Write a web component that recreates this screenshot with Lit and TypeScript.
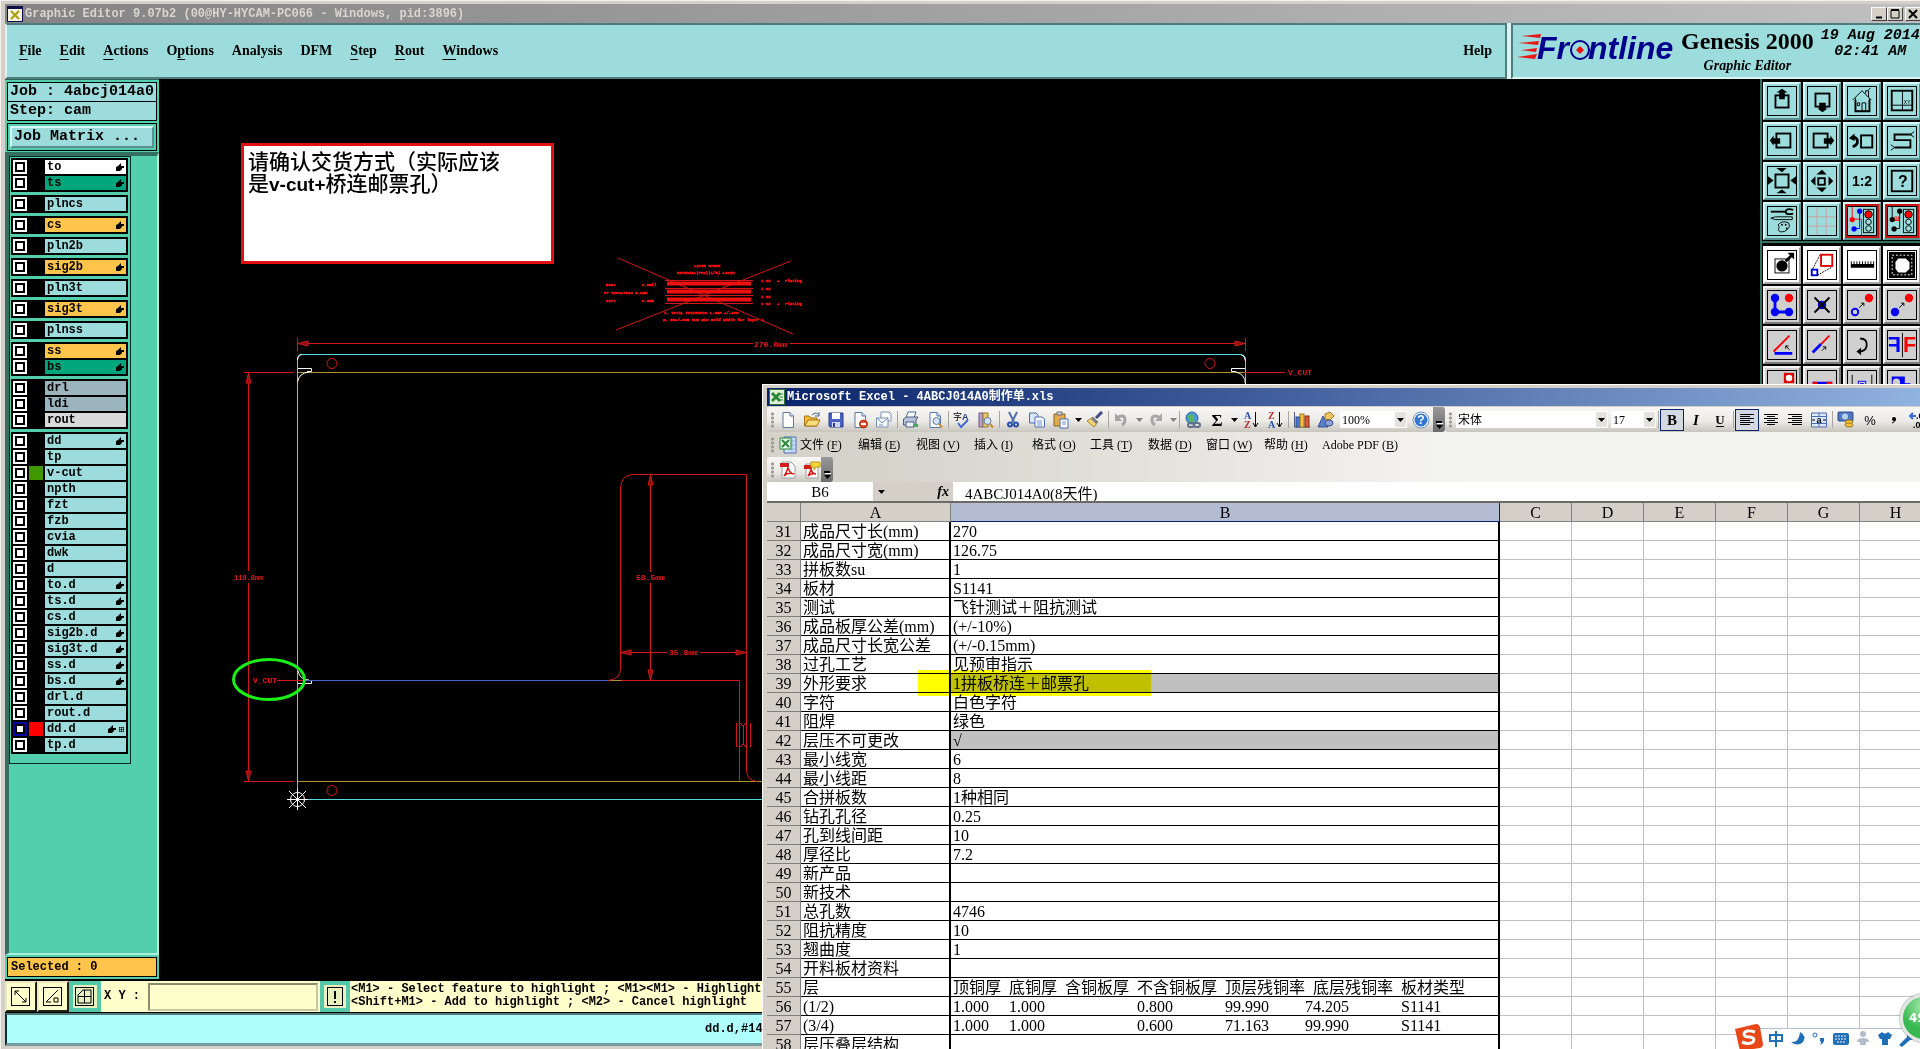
import { LitElement, html, svg, css, nothing } from "lit";
import { customElement, property } from "lit/decorators.js";
import { classMap } from "lit/directives/class-map.js";

/* ---------- data ---------- */

interface Layer { name: string; tone?: string; hand?: boolean; swatch?: string; active?: boolean; }

const GROUPS: Layer[][] = [
  [{ name: "to", tone: "white", hand: true }, { name: "ts", tone: "green", hand: true }],
  [{ name: "plncs" }],
  [{ name: "cs", tone: "orange", hand: true }],
  [{ name: "pln2b" }],
  [{ name: "sig2b", tone: "orange", hand: true }],
  [{ name: "pln3t" }],
  [{ name: "sig3t", tone: "orange", hand: true }],
  [{ name: "plnss" }],
  [{ name: "ss", tone: "orange", hand: true }, { name: "bs", tone: "green", hand: true }],
  [{ name: "drl", tone: "slate" }, { name: "ldi", tone: "slate" }, { name: "rout", tone: "silver" }],
  [
    { name: "dd", hand: true }, { name: "tp" }, { name: "v-cut", swatch: "lime" }, { name: "npth" },
    { name: "fzt" }, { name: "fzb" }, { name: "cvia" }, { name: "dwk" }, { name: "d" },
    { name: "to.d", hand: true }, { name: "ts.d", hand: true }, { name: "cs.d", hand: true },
    { name: "sig2b.d", hand: true }, { name: "sig3t.d", hand: true }, { name: "ss.d", hand: true },
    { name: "bs.d", hand: true }, { name: "drl.d" }, { name: "rout.d" },
    { name: "dd.d", hand: true, swatch: "red", active: true }, { name: "tp.d" },
  ],
];

const ROWS: [number, string, string | string[]][] = [
  [31, "成品尺寸长(mm)", "270"],
  [32, "成品尺寸宽(mm)", "126.75"],
  [33, "拼板数su", "1"],
  [34, "板材", "S1141"],
  [35, "测试", "飞针测试＋阻抗测试"],
  [36, "成品板厚公差(mm)", "(+/-10%)"],
  [37, "成品尺寸长宽公差", "(+/-0.15mm)"],
  [38, "过孔工艺", "见预审指示"],
  [39, "外形要求", "1拼板桥连＋邮票孔"],
  [40, "字符", "白色字符"],
  [41, "阻焊", "绿色"],
  [42, "层压不可更改", "√"],
  [43, "最小线宽", "6"],
  [44, "最小线距", "8"],
  [45, "合拼板数", "1种相同"],
  [46, "钻孔孔径", "0.25"],
  [47, "孔到线间距", "10"],
  [48, "厚径比", "7.2"],
  [49, "新产品", ""],
  [50, "新技术", ""],
  [51, "总孔数", "4746"],
  [52, "阻抗精度", "10"],
  [53, "翘曲度", "1"],
  [54, "开料板材资料", ""],
  [55, "层", ["顶铜厚", "底铜厚", "含铜板厚", "不含铜板厚", "顶层残铜率", "底层残铜率", "板材类型"]],
  [56, "(1/2)", ["1.000", "1.000", "", "0.800", "99.990", "74.205", "S1141"]],
  [57, "(3/4)", ["1.000", "1.000", "", "0.600", "71.163", "99.990", "S1141"]],
  [58, "层压叠层结构", ""],
];

/* ---------- icons of the editor tool box, drawn on a 30 x 30 grid ---------- */

const line = "fill:none;stroke:#000";
const TEAL_TOOLS: [string, unknown, boolean?][] = [
  ["Scroll up", svg`<rect x="8" y="9" width="14" height="13" style=${line} stroke-width="2"/><path d="M15 2L21 6H18V13H12V6H9Z"/>`],
  ["Scroll down", svg`<rect x="8" y="7" width="15" height="14" style=${line} stroke-width="2"/><path d="M15.500 27L21 23H19V17H12V23H10Z"/>`],
  ["Home view", svg`<path d="M5 14L15 4L25 14M8 12V26H23V12M15 26V17H19V26M10 17H12.500V20H10ZM19 7V4H22V11M22 3L24 1" style=${line} stroke-width="1"/><path d="M8 14V26H23V14" style=${line} stroke-width="2"/>`],
  ["Coordinates", svg`<rect x="4" y="4" width="22" height="21" style=${line} stroke-width="2"/><path d="M15.500 4V25M4 19.500H26" style=${line}/><text x="17" y="18" font-size="6" font-family="Liberation Mono">XY</text>`],
  ["Scroll left", svg`<rect x="9" y="7" width="15" height="15" style=${line} stroke-width="2"/><path d="M2 14.500L6 9V12H13V18H6V20Z"/>`],
  ["Scroll right", svg`<rect x="6" y="7" width="15" height="15" style=${line} stroke-width="2"/><path d="M28 14.500L24 9V12H17V18H24V20Z"/>`],
  ["Previous view", svg`<rect x="14" y="9" width="12" height="13" style=${line} stroke-width="2"/><path d="M5 11Q11 11 10 17Q9 20 5 21" style=${line} stroke-width="3"/><path d="M1 12L7 7V15Z"/>`],
  ["Serpentine", svg`<path d="M25 8H7V14H24V22H7" style=${line} stroke-width="2"/><path d="M24 8L28 5M24 8L28 11M7 22L3 19M7 22L3 25" style=${line}/>`],
  ["Zoom in", svg`<rect x="8" y="8" width="14" height="14" style=${line} stroke-width="2"/><path d="M0 10L6 14.500L0 19ZM30 10L24 14.500L30 19ZM9 1H20L15 5.500ZM9 28H20L15 24Z"/>`],
  ["Zoom out", svg`<rect x="11" y="12" width="7" height="7" style=${line} stroke-width="2"/><path d="M3 15L8 10V20ZM27 15L22 10V20ZM9 8H20L15 3ZM9 22H20L15 27Z"/>`],
  ["Zoom ratio", svg`<text x="15" y="20" text-anchor="middle" font-size="15" font-weight="bold" font-family="Liberation Sans">1:2</text>`],
  ["Query", svg`<rect x="4" y="4" width="22" height="22" style=${line} stroke-width="2"/><text x="16" y="21" text-anchor="middle" font-size="17" font-weight="bold" font-family="Liberation Sans">?</text>`],
  ["Drawing settings", svg`<path d="M3 4H19V6H3Z"/><path d="M27 3Q19 1 19 5Q19 9 27 7" style=${line} stroke-width="2"/><path d="M3 12L8 10.500H26V13.500H8ZM11 19Q15 14 22 17Q25 22 18 26Q12 28 11 24Q13 22 11 19Z" style=${line}/><circle cx="15" cy="19" r="1"/><circle cx="19" cy="19" r="1"/><circle cx="20" cy="23" r="1"/>`],
  ["Grid", svg`<path d="M9.500 0V30M19.500 0V30M0 10.500H30M0 20.500H30" fill="none" stroke="#c8a0a0"/>`],
  ["Net check", svg`<path d="M4.500 0V13H14.500V30" fill="none" stroke="#f00"/><path d="M12.500 5V23H7" fill="none" stroke="#00f"/><circle cx="4.500" cy="13.500" r="2.800" fill="#f00"/><circle cx="12.500" cy="4.500" r="2.800" fill="#00f"/><circle cx="6.500" cy="23.500" r="2.800" fill="#00f"/><rect x="16.500" y="2.500" width="11" height="25" style=${line}/><circle cx="22" cy="8" r="4" fill="#f00" stroke="#000"/><circle cx="22" cy="16" r="3" style=${line}/><circle cx="22" cy="23" r="3" style=${line}/>`, true],
  ["Rule check", svg`<path d="M4.500 0V13M12.500 5V23H7" style=${line}/><path d="M5 14.500H12M7.500 10V14M9.500 10V14M11.500 10V14" stroke="#f00"/><circle cx="4.500" cy="13.500" r="2.800"/><circle cx="12.500" cy="4.500" r="2.800"/><circle cx="6.500" cy="23.500" r="2.800"/><rect x="16.500" y="2.500" width="11" height="25" style=${line}/><circle cx="22" cy="8" r="4" fill="#f00" stroke="#000"/><circle cx="22" cy="16" r="3" style=${line}/><circle cx="22" cy="23" r="3" style=${line}/>`, true],
];

const GREY_TOOLS: [string, unknown][] = [
  ["Select", svg`<rect x="7.500" y="8.500" width="15" height="15" style=${line}/><circle cx="15" cy="16" r="6"/><path d="M19 11L25 5" stroke="#000" stroke-width="3"/><path d="M21 2H28V9Z"/>`],
  ["Area select", svg`<path d="M5 19L13 4M10 26L26 17" style=${line} stroke-dasharray="2 1"/><rect x="14" y="4" width="12" height="12" fill="none" stroke="#e00000" stroke-width="2"/><rect x="4" y="20" width="6" height="6" fill="none" stroke="#0000d0" stroke-width="2"/>`],
  ["Measure", svg`<path d="M3 18V11H4V14H6V11H7V14H9V11H10V14H12V11H13V14H15V11H16V14H18V11H19V14H21V11H22V14H24V11H25V14H27V11H28V18Z"/>`],
  ["Feature histogram", svg`<rect x="1" y="1" width="28" height="28"/><rect x="4.500" y="4.500" width="21" height="21" fill="none" stroke="#fff" stroke-dasharray="2 2"/><path d="M11 8H19L23 12V19L19 23H11L8 19V12Z" fill="#fff"/>`],
  ["Chain", svg`<path d="M7.500 7.500V22.500H22.500" fill="none" stroke="#00f" stroke-width="3"/><circle cx="7.500" cy="7.500" r="4.500" fill="#00f"/><circle cx="7.500" cy="22.500" r="4.500" fill="#00f"/><circle cx="22.500" cy="22.500" r="4.500" fill="#00f"/><circle cx="22.500" cy="7.500" r="4.500" fill="#f00"/>`],
  ["Delete", svg`<circle cx="15" cy="15" r="4.500" fill="#00c"/><path d="M7 7L23 23M23 7L7 23" style=${line} stroke-width="2"/>`],
  ["Copy", svg`<circle cx="7.500" cy="22.500" r="3.500" fill="none" stroke="#00f" stroke-width="2"/><circle cx="22.500" cy="7.500" r="4.500" fill="#f00"/><path d="M12 18L17 13M14 13H17V16" style=${line}/>`],
  ["Move", svg`<circle cx="7.500" cy="22.500" r="4.500" fill="#00f"/><circle cx="22.500" cy="7.500" r="4.500" fill="#f00"/><path d="M12 18L17 13M14 13H17V16" style=${line}/>`],
  ["Rotate", svg`<path d="M6 22L23 5" stroke="#f00" stroke-width="2"/><path d="M7 24H26" stroke="#00f" stroke-width="3"/><path d="M23 20L19 16M19 19V16H22" style=${line}/>`],
  ["Stretch", svg`<path d="M14 14L23 5" stroke="#f00" stroke-width="2"/><path d="M5 23L14 14" stroke="#00f" stroke-width="3"/><path d="M15 21L19 17M16 17H19V20" style=${line}/>`],
  ["Turn", svg`<path d="M13 8Q21 8 20 16Q19 22 12 22" style=${line} stroke-width="2"/><path d="M14 18L9 22L14 26Z"/>`],
  ["Mirror", svg`<g font-family="Liberation Sans" font-weight="bold" font-size="23"><text x="15" y="23" fill="#00f" transform="translate(29 0) scale(-1 1)">F</text><text x="16" y="23" fill="#f00">F</text></g><path d="M15.500 2V28" style=${line}/>`],
  ["Pad edit", svg`<rect x="17" y="2" width="11" height="11" fill="#e00000"/><circle cx="22.500" cy="7.500" r="3.500" fill="#fff"/>`],
  ["Line edit", svg`<path d="M5 13H26" stroke="#00f" stroke-width="3"/><path d="M5 13H10M20 13H26" stroke="#f00" stroke-width="3"/>`],
  ["Spread", svg`<path d="M4.500 4V20M25.500 4V20" style=${line}/><rect x="11" y="11" width="8" height="8" fill="none" stroke="#00f"/><rect x="13.500" y="13.500" width="3" height="3" fill="none" stroke="#00f"/>`],
  ["Surface edit", svg`<path d="M4 6H18V13H24V20H4Z" fill="#00f"/><circle cx="9" cy="12" r="4" fill="#cfcfcf"/>`],
];

/* ---------- icons of the spreadsheet tool bar, drawn on an 18 x 18 grid ---------- */

const page = svg`<path d="M4 1.500H11L14.500 5V16.500H4Z" fill="#fff" stroke="#5b78a8"/><path d="M11 1.500V5H14.500" fill="#cddcf2" stroke="#5b78a8"/>`;
const lens = svg`<circle cx="10.500" cy="10" r="3.500" fill="#cfe4fb" stroke="#6a7c98"/><path d="M13 13L16 16.500" stroke="#c98a2c" stroke-width="2"/>`;
const XL: Record<string, unknown> = {
  new: page,
  open: svg`<path d="M1.500 15V5H6L8 7H14V15Z" fill="#f2b93c" stroke="#a87614"/><path d="M2 15L5 9H17L14 15Z" fill="#fddc7c" stroke="#a87614"/><path d="M9 4Q13 0 16 4M16 1V5H12" fill="none" stroke="#48699c"/>`,
  save: svg`<path d="M2 2H16V16H3L2 15Z" fill="#4a62c4" stroke="#2b3b8c"/><rect x="5" y="2" width="8" height="6" fill="#fff"/><rect x="5" y="11" width="8" height="5" fill="#ccd6ee"/><rect x="6" y="12" width="2" height="4" fill="#2b3b8c"/>`,
  perm: svg`${page}<circle cx="12.500" cy="13" r="4" fill="#e2502c" stroke="#a82a10"/><path d="M10 13H15" stroke="#fff" stroke-width="2"/>`,
  mail: svg`<path d="M6 1H14L16 3V10H6Z" fill="#fff" stroke="#7a90b4"/><path d="M1.500 7H13V16H1.500Z" fill="#f4f7fc" stroke="#7a90b4"/><path d="M2 7L7 12L13 7M4 14H8" fill="none" stroke="#7a90b4"/>`,
  print: svg`<path d="M6 1H14L12 7H4Z" fill="#fff" stroke="#4d6aa0"/><path d="M1.500 8L4 6H16L14 9V14H1.500Z" fill="#b8c4dc" stroke="#4a5c80"/><path d="M4 11H12V16H4Z" fill="#eef3ff" stroke="#4a5c80"/><path d="M11 13H16V16H11Z" fill="#48a860"/>`,
  preview: svg`${page}${lens}`,
  spell: svg`<text x="0" y="9" font-size="9" font-family="Noto Sans CJK SC">字</text><text x="9" y="9" font-size="9" font-weight="bold" font-family="Liberation Sans" fill="#27407c">A</text><path d="M5 12L8 16L15 9" fill="none" stroke="#3c6bd0" stroke-width="2"/>`,
  research: svg`<path d="M2 2H6V16H2Z" fill="#b8a0cc" stroke="#6d5488"/><path d="M6 2H11V16H6Z" fill="#e8c868" stroke="#98782c"/>${lens}`,
  cut: svg`<path d="M5 1L10 11M13 1L8 11" stroke="#5070a8" stroke-width="2"/><circle cx="6" cy="13.500" r="2" fill="none" stroke="#2850a8" stroke-width="2"/><circle cx="12" cy="13.500" r="2" fill="none" stroke="#2850a8" stroke-width="2"/>`,
  copy: svg`<path d="M1.500 2H8L10 4V12H1.500Z" fill="#dce8fa" stroke="#4a6cb0"/><path d="M7 6H14L16.500 8V16H7Z" fill="#fff" stroke="#4a6cb0"/><path d="M9 10H14M9 12H14M9 14H14" stroke="#6a90d8"/>`,
  paste: svg`<path d="M2 3H13V15H2Z" fill="#e2ac4c" stroke="#8c6420"/><path d="M5 1H10V4H5Z" fill="#d8d8d8" stroke="#6c6c6c"/><path d="M8 8H16V17H8Z" fill="#fff" stroke="#4a6cb0"/><path d="M10 11H14M10 13H14" stroke="#6a90d8"/>`,
  painter: svg`<path d="M16 1L10 7" stroke="#3c4c88" stroke-width="3"/><path d="M7 6L12 11L8 16L1 10Z" fill="#f4d470" stroke="#a88434"/><path d="M7 6L12 11L10 13L5 8Z" fill="#7c7c9c"/>`,
  undo: svg`<path d="M3 7Q12 2 12 9Q12 12 9 14" fill="none" stroke="#a4a4a4" stroke-width="3"/><path d="M2 2V10H9Z" fill="#a4a4a4"/>`,
  redo: svg`<path d="M14 7Q5 2 5 9Q5 12 8 14" fill="none" stroke="#a8a8a8" stroke-width="3"/><path d="M15 2V10H8Z" fill="#a8a8a8"/>`,
  link: svg`<circle cx="8" cy="7" r="6" fill="#4c98d8" stroke="#2c6498"/><path d="M4 5Q8 2 10 5Q8 8 11 10Q7 14 5 9Z" fill="#58b858"/><rect x="4" y="12" width="6" height="4" rx="2" fill="none" stroke="#60708c" stroke-width="2"/><rect x="10" y="12" width="6" height="4" rx="2" fill="none" stroke="#60708c" stroke-width="2"/>`,
  sum: svg`<text x="9" y="15" text-anchor="middle" font-size="17" font-weight="bold" font-family="Liberation Serif">Σ</text>`,
  az: svg`<g font-size="10" font-weight="bold" font-family="Liberation Serif"><text x="2" y="8" fill="#2c50a8">A</text><text x="2" y="17" fill="#b03030">Z</text></g><path d="M13.500 1V15M11 12L13.500 16L16 12" fill="none" stroke="#000"/>`,
  za: svg`<g font-size="10" font-weight="bold" font-family="Liberation Serif"><text x="2" y="8" fill="#b03030">Z</text><text x="2" y="17" fill="#2c50a8">A</text></g><path d="M13.500 1V15M11 12L13.500 16L16 12" fill="none" stroke="#000"/>`,
  chart: svg`<path d="M1.500 1V16H17" fill="none" stroke="#4a5c80"/><rect x="3" y="6" width="4" height="10" fill="#4878d0" stroke="#2c4c94"/><rect x="7" y="3" width="4" height="13" fill="#f0c040" stroke="#a07818"/><rect x="12" y="5" width="4" height="11" fill="#d85c38" stroke="#8c3014"/>`,
  draw: svg`<path d="M8 3L13 1L17 5L13 9L8 8Z" fill="#f0c860" stroke="#98782c"/><path d="M6 5L11 16H1Z" fill="#5880c8" stroke="#34508c"/><ellipse cx="12" cy="12" rx="4" ry="3" fill="#8ca4d8" stroke="#34508c"/>`,
  help: svg`<circle cx="9" cy="9" r="8" fill="#fff" stroke="#6c94d0"/><circle cx="9" cy="9" r="6.500" fill="#3474d4"/><text x="9" y="13" text-anchor="middle" font-size="12" font-weight="bold" fill="#fff" font-family="Liberation Sans">?</text>`,
  bold: svg`<text x="9" y="14" text-anchor="middle" font-size="15" font-weight="bold" font-family="Liberation Serif">B</text>`,
  italic: svg`<text x="9" y="14" text-anchor="middle" font-size="15" font-weight="bold" font-style="italic" font-family="Liberation Serif">I</text>`,
  under: svg`<text x="9" y="13" text-anchor="middle" font-size="13" font-weight="bold" font-family="Liberation Serif">U</text><path d="M5 15.500H13" stroke="#000"/>`,
  left: svg`<path d="M2 3.500H16M2 5.500H12M2 7.500H16M2 9.500H12M2 11.500H16M2 13.500H12" stroke="#000"/>`,
  center: svg`<path d="M2 3.500H16M5 5.500H13M2 7.500H16M5 9.500H13M2 11.500H16M5 13.500H13" stroke="#000"/>`,
  right: svg`<path d="M2 3.500H16M6 5.500H16M2 7.500H16M6 9.500H16M2 11.500H16M6 13.500H16" stroke="#000"/>`,
  merge: svg`<path d="M1.500 2H16.500V16H1.500ZM1.500 5.500H16.500M1.500 12.500H16.500M9 2V5M9 13V16" fill="#dce8fa" stroke="#4a6cb0"/><text x="9" y="12" text-anchor="middle" font-size="9" font-weight="bold" font-family="Liberation Sans">a</text><path d="M2 9H5M13 9H16" stroke="#000"/>`,
  money: svg`<rect x="1" y="1" width="15" height="9" rx="1" fill="#5078c0" stroke="#2c4c94"/><circle cx="8" cy="5.500" r="3" fill="#b8d0f0"/><ellipse cx="12" cy="11" rx="4" ry="2" fill="#f0c040" stroke="#a07818"/><ellipse cx="12" cy="14" rx="4" ry="2" fill="#f0c040" stroke="#a07818"/>`,
  percent: svg`<text x="9" y="14" text-anchor="middle" font-size="13" font-family="Liberation Sans">%</text>`,
  comma: svg`<circle cx="9" cy="8" r="2"/><path d="M10.500 8Q10.500 11 7 12" fill="none" stroke="#000"/>`,
  decimal: svg`<g font-size="9" font-weight="bold" font-family="Liberation Sans"><text x="7" y="8">.0</text><text x="4" y="17">.00</text></g><path d="M7 5H1M4 2L1 5L4 8" fill="none" stroke="#3c6bd0" stroke-width="2"/>`,
  book: svg`<path d="M5 1H17V17H5Z" fill="#cfe0f8" stroke="#4a6cb0"/><path d="M9 5H17M9 9H17M9 13H17M13 1V17" stroke="#8cacd8"/><path d="M1 2H12V13H1Z" fill="#e8f6e8" stroke="#2c8838"/><path d="M3 4L10 11M10 4L3 11" stroke="#2c8838" stroke-width="2"/>`,
  pdf: svg`<path d="M3 1H12L16 5V17H3Z" fill="#fff" stroke="#9c9c9c"/><rect x="1" y="2" width="9" height="4" fill="#d41c1c"/><path d="M5 15Q9 9 9 6Q10 12 15 13Q9 11 5 15Z" fill="none" stroke="#d41c1c" stroke-width="1.500"/>`,
  pdfNote: svg`<path d="M3 3H12L15 6V17H3Z" fill="#fff" stroke="#9c9c9c"/><rect x="1" y="4" width="8" height="4" fill="#d41c1c"/><path d="M5 15Q8 10 8 8Q9 13 13 13Q8 12 5 15Z" fill="none" stroke="#d41c1c" stroke-width="1.500"/><path d="M8 1H17V6H13L11 9V6H8Z" fill="#f8d838" stroke="#b89810"/>`,
};

const caret = html`<svg class="caret" viewBox="0 0 7 4" width="7" height="4" aria-hidden="true"><path d="M0 0H7L3.500 4Z"/></svg>`;
const overflow = html`<svg viewBox="0 0 7 8" width="7" height="8" aria-hidden="true"><path d="M0 1H6" stroke="#000" stroke-width="2"/><path d="M1 2.500H7" stroke="#fff"/><path d="M0 4H7L3.500 8Z"/></svg>`;
const hand = html`<svg class="hand" viewBox="0 0 8 8" width="8" height="8" aria-hidden="true"><path d="M0 4L2 3L4 1L5 0V3H8V5H6V6L4 8H0Z"/></svg>`;

/* ---------- layer list ---------- */

@customElement("layer-panel")
export class LayerPanel extends LitElement {
  static styles = css`
    :host { display: flex; flex-direction: column; gap: 3px; width: 122px; padding: 1px 2px 9px 1px; border: 1px solid #0c2a22;
      font: bold 12px/14px "Liberation Mono", monospace; color: #000; background: #54cfae; }
    .group { display: flex; flex-direction: column; gap: 2px; padding: 2px; background: #000; }
    .row { display: flex; height: 14px; }
    .tick { appearance: none; flex: none; width: 14px; height: 14px; margin: 0 2px 0 0; border: 2px solid #fff; background: #fff; box-shadow: inset 0 0 0 2px #000; }
    .tick.active { border-color: #0808a0; }
    .swatch { flex: none; width: 14px; margin-right: 2px; background: #000; }
    .swatch.lime { background: #409800; }
    .swatch.red { background: #f00; }
    .name { flex: 1; display: flex; align-items: center; gap: 3px; padding: 0 2px; background: #9cdcdc; }
    .name span { flex: 1; }
    .white { background: #fff; }
    .green { background: #00a57c; }
    .orange { background: #ffc44c; }
    .slate { background: #9cb4be; }
    .silver { background: #dadada; }
  `;
  render() {
    return GROUPS.map((g) => html`<div class="group">${g.map((l) => html`
      <label class="row">
        <input class=${classMap({ tick: true, active: !!l.active })} type="checkbox" .checked=${!!l.active}>
        <i class="swatch ${l.swatch ?? ""}"></i>
        <span class="name ${l.tone ?? ""}"><span>${l.name}</span>${l.hand ? hand : nothing}${l.active
          ? html`<svg viewBox="0 0 5 5" width="5" height="5"><path d="M0 .5H5M0 2.500H5M0 4.500H5M.5 0V5M2.500 0V5M4.500 0V5" stroke="#000" stroke-width=".6"/></svg>` : nothing}</span>
      </label>`)}</div>`);
  }
}

/* ---------- tool tile ---------- */

@customElement("tool-tile")
export class ToolTile extends LitElement {
  @property() label = "";
  @property() tone = "teal";
  @property({ attribute: false }) icon: unknown;
  static styles = css`
    :host { display: block; }
    .tile { display: grid; place-items: center; width: 38px; height: 38px; padding: 0; border: 2px solid; border-radius: 0; }
    .teal { background: #9cdcdc; border-color: #d8f8f8 #5c9090 #5c9090 #d8f8f8; }
    .grey { background: #cfcfcf; border-color: #f4f4f4 #7c7c7c #7c7c7c #f4f4f4; }
    .white { background: #fff; border-color: #fff #a4a4a4 #a4a4a4 #fff; }
    .alert { background: #c81414; border-color: #d8f8f8 #5c9090 #5c9090 #d8f8f8; }
    .alert svg { background: #9cdcdc; }
    svg { display: block; width: 30px; height: 30px; border: 1px solid #000; box-sizing: border-box; }
  `;
  render() {
    return html`<button class="tile ${this.tone}" aria-label=${this.label}><svg viewBox="0 0 30 30">${this.icon}</svg></button>`;
  }
}

/* ---------- board drawing ---------- */

@customElement("board-view")
export class BoardView extends LitElement {
  static styles = css`
    :host { display: block; height: 100%; background: #000; overflow: hidden; }
    svg { display: block; width: 100%; height: 100%; }
    .r { fill: none; stroke: #d01818; }
    .rf { fill: #8c1010; stroke: #d01818; }
    .c { fill: none; stroke: #50d8d8; }
    .w { fill: none; stroke: #fff; }
    .y { fill: none; stroke: #b09030; }
    text { font-family: "Liberation Mono", monospace; font-size: 8px; font-weight: bold; fill: #e81818; }
    .small { font-size: 7px; }
    .tiny text { font-size: 4px; font-weight: bold; fill: #ff1010; stroke: #ff1010; stroke-width: .4px; }
  `;
  render() {
    const arrow = (x: number, y: number, a: number) =>
      svg`<path class="rf" transform="translate(${x} ${y}) rotate(${a})" d="M0 0L10 -2.500V2.500Z"/>`;
    return html`<svg role="img" aria-label="Board outline"><g transform="translate(-159 -79)">
      <path class="r" d="M297.500 338V351M1245.500 338V351M298 343.500H753M790 343.500H1245"/>
      ${arrow(298, 343.5, 0)}${arrow(1245, 343.5, 180)}
      <text x="754" y="347">270.0mm</text>
      <path class="y" d="M297 372.500H1245M297 781.500H770"/>
      <path class="c" d="M770 799.500H297.500V358Q298 354.500 301 354.500H1241Q1245 355 1245.500 358V384"/>
      <path class="w" d="M297.500 360Q298 355 302 354.500M1241 354.500Q1245 356 1245.500 361M298 368.500H311.500V371.500H307M297.500 382Q299 373 309 372M1245 368.500H1231.500V371.500H1236M1236 372Q1245 374 1245.500 384M298 671Q300 680 309 680M298 683.500H311.500V680"/>
      <circle class="r" cx="332" cy="363.500" r="5"/><circle class="r" cx="332" cy="790.500" r="5"/><circle class="r" cx="1210" cy="363.500" r="5"/>
      <path class="r" d="M244 372.500H294M244 781.500H294M248.500 373V571M248.500 583V781"/>
      ${arrow(248.5, 373, 90)}${arrow(248.5, 781, -90)}
      <text class="small" x="234" y="580">118.8mm</text>
      <text x="253" y="683">V_CUT</text><path class="r" d="M277 680.500H306M1245 372.500H1285"/><text x="1288" y="375">V_CUT</text>
      <path d="M306 680.500H608" stroke="#4860d0"/><path class="y" d="M608 680.500H621"/>
      <path class="r" d="M608 680.500Q620.500 679 620.500 669V488Q621 475 633 474.500H746.500V771Q747 780 757 781.500M621 680.500H739.500V781"/>
      <path class="r" d="M650.500 475V572M650.500 583V680M621 652.500H667M700 652.500H746"/>
      ${arrow(650.5, 475, 90)}${arrow(650.5, 680, -90)}${arrow(621, 652.5, 0)}${arrow(746, 652.5, 180)}
      <text x="636" y="580">58.5mm</text><text x="669" y="655">35.8mm</text>
      <path class="r" d="M736.500 723V747M743.500 725V745M750.500 723V747M739 722L743 726L747 722M739 748L743 744L747 748"/>
      <circle class="w" cx="297.500" cy="799.500" r="7"/>
      <path class="w" d="M287 799.500H308M297.500 789V810M289 791L306 808M306 791L289 808"/>
      <ellipse cx="269" cy="679.500" rx="35.500" ry="20" fill="none" stroke="#18f018" stroke-width="3"/>
      <g class="tiny">
        <path class="r" d="M618 258L793 334M791 261L616 330M665 280.500H753M665 288.500H753M665 295.500H753M665 303.500H753"/>
        <path d="M667 283.500H751M667 291.500H751M667 299.500H751" stroke="#f01010" stroke-width="4"/>
        <text x="694" y="267">LAYER STACK</text><text x="677" y="274">MATERIAL(FR4)(1/4) LAYER</text>
        <text x="606" y="286">Base</text><text x="642" y="286">3.0mil</text>
        <text x="604" y="294">PP 1080+7628 0.2mm</text>
        <text x="606" y="302">Core</text><text x="642" y="302">0.8mm</text>
        <text x="761" y="282">1 OZ</text><text x="777" y="282">+</text><text x="785" y="282">Plating</text>
        <text x="761" y="290">1 OZ</text><text x="761" y="298">1 OZ</text>
        <text x="761" y="305">1 OZ</text><text x="777" y="305">+</text><text x="785" y="305">Plating</text>
        <text x="664" y="314">1. TOTAL THICKNESS 1.6MM +/-10%</text>
        <text x="663" y="321">2. 5%+/-5um 5um min Gold width for layer 1</text>
      </g>
    </g></svg>`;
  }
}

/* ---------- spreadsheet window ---------- */

@customElement("sheet-window")
export class SheetWindow extends LitElement {
  static styles = css`
    :host { display: flex; flex-direction: column; box-sizing: border-box; overflow: hidden; padding: 3px 0 0 4px; border: solid #fff; border-width: 1px 0 0 1px;
      background: #d4d0c8; color: #000; font: 12px/16px "Liberation Serif", "Noto Sans CJK SC", serif; }
    * { box-sizing: border-box; }
    button { appearance: none; border: 0; padding: 0; background: none; color: inherit; font: inherit; border-radius: 0; }
    .title { flex: none; display: flex; align-items: center; gap: 2px; height: 18px; margin-bottom: 1px; padding-left: 2px;
      background: linear-gradient(90deg, #0a246a, #4a68a4 50%, #92b4e0); color: #fff; font: bold 12px/18px "Liberation Mono", "Noto Sans CJK SC", monospace; white-space: nowrap; }
    .bars { flex: none; background: linear-gradient(90deg, #d6d3cb 10%, #f4f4f2 60%); }
    .line { display: flex; height: 25px; }
    .strip { display: flex; align-items: center; height: 25px; padding-left: 4px; border-radius: 3px 0 0 3px; background: linear-gradient(#f8f7f5, #ecebe7 55%, #c8c5bd); }
    .grow { flex: 1; }
    .grip { flex: none; width: 3px; height: 16px; margin-right: 2px; background: radial-gradient(circle, #9c988f 1px, #0000 2px) 0 0 / 3px 4px; }
    .ico { flex: none; display: grid; place-items: center; width: 24px; height: 22px; }
    .ico.on { border: 1px solid #0a246a; background: #d4d8e0; }
    .ico svg { display: block; }
    .drop { flex: none; display: grid; place-items: center; width: 10px; height: 22px; }
    .dim { opacity: .45; }
    .sep { flex: none; width: 1px; height: 17px; margin: 0 1px; background: #a8a59d; }
    .cap { flex: none; display: flex; align-items: flex-end; justify-content: center; width: 12px; height: 25px; padding-bottom: 3px; border-radius: 0 3px 3px 0; background: linear-gradient(#989898, #6c6c6c); }
    .combo { flex: none; display: flex; align-items: center; height: 17px; margin: 0 2px; background: #fff; }
    .combo select { appearance: none; flex: 1; min-width: 0; border: 0; padding: 0 2px; background: #fff; color: #000; font: inherit; }
    .combo span { display: grid; place-items: center; width: 11px; height: 15px; margin-right: 1px; background: #e4e2dc; }
    .zoom { width: 67px; } .face { width: 152px; margin-right: 1px; } .size { width: 45px; margin-right: 1px; }
    .menu { display: flex; align-items: center; height: 25px; padding-left: 4px; }
    .menu button { min-width: 58px; text-align: left; white-space: nowrap; font: 12px/16px "Liberation Serif", "Noto Sans CJK SC", serif; }
    .menu .ico { min-width: 0; width: 24px; }
    u { text-underline-offset: 2px; }
    .short { width: 54px; }
    .formula { flex: none; display: flex; align-items: center; height: 19px; background: #d4d0c8; }
    .formula input { height: 19px; border: 0; border-radius: 0; padding: 1px 0 0; background: #fff; color: #000; font: 15px/18px "Liberation Serif", "Noto Sans CJK SC", serif; }
    .cellname { width: 106px; text-align: center; }
    .formula .text { flex: 1; min-width: 0; padding-left: 12px; }
    .pick { width: 16px; display: grid; place-items: center; }
    .fx { width: 64px; padding-right: 4px; text-align: right; font: italic bold 14px/18px "Liberation Serif", serif; }
    .grid { flex: 1; min-height: 0; overflow: hidden; border-top: 2px solid #6c6a66; background: #fff; }
    table { width: 1165px; table-layout: fixed; border-collapse: separate; border-spacing: 0; font: 16px/17px "Liberation Serif", "Noto Sans CJK SC", serif; }
    .num { width: 34px; } .a { width: 150px; } .b { width: 549px; } .rest { width: 72px; }
    th { height: 19px; padding: 1px 0 0; border: solid #808080; border-width: 0 1px 1px 0; background: #d4d0c8; font-weight: normal; text-align: center; }
    thead .cur { background: #b4bcd4; border-color: #0a246a; }
    td { height: 19px; padding: 0 0 0 2px; border: solid #c0c0c0; border-width: 0 1px 1px 0; white-space: nowrap; overflow: hidden; }
    .box { border-color: #000; border-right-width: 2px; }
    td div { height: 18px; line-height: 20px; }
    td .cols { display: grid; grid-template-columns: 56px 56px 72px 88px 80px 96px auto; }
    td .cols.head { grid-template-columns: 56px 56px 72px 88px 88px 88px auto; }
    .shade { background: #c0c0c0; }
    .marker { position: absolute; left: 155px; top: 285px; width: 233px; height: 26px; background: #ff0; mix-blend-mode: multiply; pointer-events: none; }
  `;
  private ico(key: string, label: string, cls = "") {
    return html`<button class="ico ${cls}" aria-label=${label}><svg viewBox="0 0 18 18" width="18" height="18">${XL[key]}</svg></button>`;
  }
  private menu(text: string, key: string) {
    return html`<button>${text} (<u>${key}</u>)</button>`;
  }
  render() {
    const sep = html`<i class="sep"></i>`;
    const drop = (dim = false) => html`<button class=${classMap({ drop: true, dim })} aria-label="More">${caret}</button>`;
    return html`
      <div class="title"><svg width="16" height="16" viewBox="0 0 16 16"><rect x=".5" y=".5" width="15" height="15" fill="#e0f0dc" stroke="#2c7038"/><path d="M3 4L11 12M11 4L3 12" stroke="#2c8838" stroke-width="3"/><path d="M11 5H14M11 8H14M11 11H14" stroke="#2c8838"/></svg><span>Microsoft Excel - 4ABCJ014A0制作单.xls</span></div>
      <div class="bars">
        <div class="line">
          <div class="strip"><i class="grip"></i>
            ${this.ico("new", "New")}${this.ico("open", "Open")}${this.ico("save", "Save")}${this.ico("perm", "Permission")}${this.ico("mail", "E-mail")}${sep}
            ${this.ico("print", "Print")}${this.ico("preview", "Print preview")}${sep}
            ${this.ico("spell", "Spelling")}${this.ico("research", "Research")}${sep}
            ${this.ico("cut", "Cut")}${this.ico("copy", "Copy")}${this.ico("paste", "Paste")}${drop()}${this.ico("painter", "Format painter")}${sep}
            ${this.ico("undo", "Undo")}${drop(true)}${this.ico("redo", "Redo")}${drop(true)}${sep}
            ${this.ico("link", "Hyperlink")}${this.ico("sum", "AutoSum")}${drop()}${this.ico("az", "Sort ascending")}${this.ico("za", "Sort descending")}${sep}
            ${this.ico("chart", "Chart")}${this.ico("draw", "Drawing")}
            <div class="combo zoom"><select aria-label="Zoom"><option>100%</option></select><span>${caret}</span></div>
            ${this.ico("help", "Help")}
          </div>
          <div class="cap">${overflow}</div>
          <div class="strip grow"><i class="grip"></i>
            <div class="combo face"><select aria-label="Font"><option>宋体</option></select><span>${caret}</span></div>
            <div class="combo size"><select aria-label="Font size"><option>17</option></select><span>${caret}</span></div>${sep}
            ${this.ico("bold", "Bold", "on")}${this.ico("italic", "Italic")}${this.ico("under", "Underline")}${sep}
            ${this.ico("left", "Align left", "on")}${this.ico("center", "Center")}${this.ico("right", "Align right")}${this.ico("merge", "Merge cells")}${sep}
            ${this.ico("money", "Currency")}${this.ico("percent", "Percent")}${this.ico("comma", "Comma")}${this.ico("decimal", "Increase decimal")}
          </div>
        </div>
        <div class="menu"><i class="grip"></i>${this.ico("book", "Workbook")}
          ${this.menu("文件", "F")}${this.menu("编辑", "E")}${this.menu("视图", "V")}${this.menu("插入", "I")}${this.menu("格式", "O")}
          ${this.menu("工具", "T")}${this.menu("数据", "D")}${this.menu("窗口", "W")}${this.menu("帮助", "H")}${this.menu("Adobe PDF", "B")}
        </div>
        <div class="line"><div class="strip short"><i class="grip"></i>${this.ico("pdf", "Convert to PDF")}${this.ico("pdfNote", "Convert and review")}</div><div class="cap">${overflow}</div></div>
      </div>
      <div class="formula"><input class="cellname" aria-label="Name box" .value=${"B6"}><button class="pick" aria-label="Names">${caret}</button><span class="fx">fx</span><input class="text" aria-label="Formula" .value=${"4ABCJ014A0(8天件)"}></div>
      <div class="grid"><table>
        <colgroup><col class="num"><col class="a"><col class="b"><col class="rest" span="6"></colgroup>
        <thead><tr><th></th><th>A</th><th class="cur">B</th>${["C", "D", "E", "F", "G", "H"].map((c) => html`<th>${c}</th>`)}</tr></thead>
        <tbody>${ROWS.map(([n, a, b]) => html`<tr><th>${n}</th><td class="box"><div>${a}</div></td>
          <td class=${classMap({ box: true, shade: n === 39 || n === 42 })}>${Array.isArray(b)
            ? html`<div class=${classMap({ cols: true, head: n === 55 })}>${b.map((t) => html`<span>${t}</span>`)}</div>`
            : html`<div>${b}</div>`}</td><td></td><td></td><td></td><td></td><td></td><td></td></tr>`)}</tbody>
      </table></div>
      <i class="marker"></i>`;
  }
}

/* ---------- desktop ---------- */

@customElement("app-root")
export class AppRoot extends LitElement {
  static styles = css`
    :host { display: block; position: relative; height: 100vh; overflow: hidden; background: #d4d0c8; color: #000; }
    * { box-sizing: border-box; }
    button { border-radius: 0; color: inherit; }
    .editor { display: flex; flex-direction: column; height: 100%; margin-right: -6px; padding: 3px 4px 3px 4px; border: solid #f4f2ee; border-width: 1px 0 0 1px; }
    .title { flex: none; display: flex; align-items: center; gap: 2px; height: 19px; padding: 0 1px 0 2px; background: linear-gradient(90deg, #848484, #c0c0c0);
      color: #d8d6d0; font: bold 12px/18px "Liberation Mono", monospace; }
    .title span { flex: 1; }
    .wbtn { display: grid; place-items: center; width: 16px; height: 14px; padding: 0; border: 1px solid; border-color: #fff #404040 #404040 #fff; background: #d4d0c8; }
    .title .wbtn + .wbtn { margin-left: -2px; }
    .title .wbtn.close { margin-left: 0; }
    .menubar { flex: none; display: flex; height: 56px; gap: 4px; background: #d8f4f4; }
    .panel { display: flex; align-items: center; border: 2px solid; border-color: #507c7c #507c7c #507c7c #d8f4f4; background: #9cdcdc; }
    .menus { flex: 1; gap: 18px; padding: 0 13px 0 12px; font: bold 14px/20px "Liberation Serif", serif; }
    .menus button { border: 0; padding: 0; background: none; font: inherit; }
    .menus u { text-underline-offset: 4px; }
    .menus .help { margin-left: auto; }
    .brand { width: 411px; padding-left: 4px; gap: 2px; border-color: #507c7c #9cdcdc #d8f4f4 #507c7c; border-width: 2px 0 2px 2px; }
    .brand svg { flex: none; }
    .product { display: flex; flex-direction: column; align-items: center; font: bold 24px/30px "Liberation Serif", serif; white-space: nowrap; }
    .product em { font: italic bold 14px/20px "Liberation Serif", serif; }
    .clock { align-self: flex-start; padding: 3px 0 0 5px; text-align: center; font: italic bold 15px/16px "Liberation Mono", monospace; white-space: nowrap; }
    .main { flex: 1; min-height: 0; display: flex; background: #000; }
    .side { flex: none; display: flex; flex-direction: column; width: 154px; margin-bottom: 2px; background: #54cfae; font: bold 15px/18px "Liberation Mono", monospace; }
    .head { display: flex; flex-direction: column; padding: 2px 2px 1px; border-top: 1px solid #2c6454; }
    .info { height: 20px; padding-left: 2px; border: 1px solid #000; background: #9cdcdc; white-space: nowrap; }
    .info + .info { margin-top: -1px; }
    .well { margin-top: 2px; padding: 2px; border: 1px solid #000; }
    .matrix { display: block; width: 100%; height: 22px; padding: 0 0 0 2px; border: 2px solid; border-color: #d8f8f8 #5c9090 #5c9090 #d8f8f8; background: #9cdcdc; font: inherit; text-align: left; }
    .layers { flex: 1; min-height: 0; display: flex; align-items: flex-start; border: solid; border-width: 4px 2px 2px 4px; border-color: #34705f #a8f0dc #a8f0dc #34705f; overflow: hidden; }
    .selected { margin: 2px; height: 20px; padding: 0 3px; border: 1px solid #000; background: #ffc44c; font: bold 12px/18px "Liberation Mono", monospace; }
    .canvas { position: relative; flex: 1; min-width: 0; }
    .note { position: absolute; left: 82px; top: 64px; width: 313px; height: 121px; padding: 3px 4px; border: 3px solid #e41010; background: #fff;
      font: 500 21px/22px "Noto Sans CJK SC", sans-serif; white-space: nowrap; }
    .note b { font: bold 19px/22px "Liberation Sans", sans-serif; }
    .tools { flex: none; display: flex; flex-direction: column; gap: 2px; width: 162px; padding-left: 2px; background: #34705f; overflow: hidden; }
    .tiles { display: grid; grid-template-columns: repeat(4, 38px); gap: 2px; padding: 3px 1px 1px; background: #000; }
    .cmd { flex: none; display: flex; height: 32px; background: #ffc; border-bottom: 1px solid #000; font: bold 12px/13px "Liberation Mono", monospace; }
    .mode { flex: none; display: grid; place-items: center; width: 32px; padding: 0; border: 2px solid; border-color: #e8e8c0 #20201a #20201a #e8e8c0; background: #ffc; }
    .mode.in { border: 4px solid #54c8a8; background: #e8f0c0; }
    .cmd .mode.bang { width: 30px; }
    .cmd label { flex: none; align-self: center; width: 45px; padding-left: 3px; white-space: nowrap; }
    .xy { flex: none; width: 170px; height: 28px; margin: 2px 2px; border: 2px solid; border-color: #8c8c70 #c8c8a0 #c8c8a0 #8c8c70; border-radius: 0; background: #ffc; font: inherit; }
    .hint { padding: 2px 1px; white-space: nowrap; }
    .status { flex: none; height: 33px; padding: 0 0 0 698px; border: solid; border-width: 2px 2px 3px; border-color: #507c7c #507c7c #749c9c #0c3030; background: #b0ffff; font: bold 12px/28px "Liberation Mono", monospace; }
    .sheet { position: absolute; left: 762px; top: 384px; right: -12px; bottom: 0; }
    .ime { position: absolute; right: -5px; bottom: 0; display: flex; align-items: flex-end; }
    .ime .bar { display: flex; align-items: center; gap: 4px; height: 21px; margin-left: -18px; padding-left: 20px; border-top: 1px solid #b4c0d0; background: #fff; }
    .ime .bar svg { display: block; }
    .logo { position: relative; z-index: 1; }
    .ball { position: absolute; right: -23px; bottom: 7px; width: 48px; height: 48px; padding-left: 6px; border: 3px solid #e4e8e4; border-radius: 50%; box-shadow: 0 0 2px #444; background: radial-gradient(circle at 50% 20%, #a8ecb0, #38b850 60%); color: #fff; font: bold 12px/42px "DejaVu Sans", sans-serif; }
  `;
  render() {
    const box = (d: string) => html`<svg width="22" height="22" viewBox="0 0 22 22"><rect x="1.500" y="1.500" width="18" height="18" fill="none" stroke="#000"/><path d=${d} fill="none" stroke="#000"/></svg>`;
    const tile = ([label, icon]: [string, unknown, boolean?], tone: string) =>
      html`<tool-tile .label=${label} .icon=${icon} .tone=${tone}></tool-tile>`;
    return html`
      <section class="editor">
        <header class="title">
          <svg width="16" height="16" viewBox="0 0 16 16"><rect width="16" height="16" fill="#101048"/><rect x="1" y="3" width="14" height="12" fill="#f4f4e0"/><path d="M4 5L12 13M12 5L4 13" stroke="#a89c10" stroke-width="2"/></svg>
          <span>Graphic Editor 9.07b2 (00@HY-HYCAM-PC066 - Windows, pid:3896)</span>
          <button class="wbtn" aria-label="Minimize"><svg width="10" height="10"><path d="M2 8.500H8" stroke="#000" stroke-width="2"/></svg></button>
          <button class="wbtn" aria-label="Maximize"><svg width="10" height="10"><path d="M1 1.500H9V9H1Z" fill="none" stroke="#000"/><path d="M1 1H9" stroke="#000" stroke-width="2"/></svg></button>
          <button class="wbtn close" aria-label="Close"><svg width="10" height="10"><path d="M1 1L9 9M9 1L1 9" stroke="#000" stroke-width="2"/></svg></button>
        </header>
        <div class="menubar">
          <nav class="panel menus">
            <button><u>F</u>ile</button><button><u>E</u>dit</button><button><u>A</u>ctions</button><button>O<u>p</u>tions</button><button>Analysis</button><button>DFM</button><button><u>S</u>tep</button><button><u>R</u>out</button><button><u>W</u>indows</button>
            <button class="help">Help</button>
          </nav>
          <div class="panel brand">
            <svg width="162" height="44" viewBox="0 0 162 44" role="img" aria-label="Frontline">
              <g fill="#e81818"><path d="M4 7L24 5L23 9Z"/><path d="M1 14L22 12L21 16Z"/><path d="M4 21L20 19L19 23Z"/><path d="M0 28L20 25L18 30Z"/></g>
              <g font-family="Liberation Sans" font-size="32" font-weight="bold" font-style="italic" fill="#00008c"><text x="20" y="30">Fr</text><text x="71" y="30">ntline</text></g>
              <circle cx="63" cy="21" r="9" fill="none" stroke="#00008c" stroke-width="2"/><path d="M63 17L67 21L63 25L59 21Z" fill="#f01010"/>
            </svg>
            <div class="product"><span>Genesis 2000</span><em>Graphic Editor</em></div>
            <div class="clock">19 Aug 2014<br>02:41 AM</div>
          </div>
        </div>
        <div class="main">
          <aside class="side">
            <div class="head">
              <div class="info">Job : 4abcj014a0</div>
              <div class="info">Step: cam</div>
              <div class="well"><button class="matrix">Job Matrix ...</button></div>
            </div>
            <div class="layers"><layer-panel></layer-panel></div>
            <div class="selected">Selected : 0</div>
          </aside>
          <div class="canvas">
            <board-view></board-view>
            <div class="note">请确认交货方式（实际应该<br>是<b>v-cut+</b>桥连邮票孔）</div>
          </div>
          <div class="tools">
            <div class="tiles">${TEAL_TOOLS.map((t) => tile(t, t[2] ? "alert" : "teal"))}</div>
            <div class="tiles">${GREY_TOOLS.map((t, i) => tile(t, i < 4 ? "white" : "grey"))}</div>
          </div>
        </div>
        <div class="cmd">
          <button class="mode" aria-label="Snap">${box("M5 5L16 16M5 9V5H9M12 16H16V12")}</button>
          <button class="mode" aria-label="Angle">${box("M4 16L16 4M4 16H9M12 12H16V16H12Z")}</button>
          <button class="mode in" aria-label="Grid snap">${box("M4 9L9 4H17V17H4ZM10.500 4V17M4 10.500H17")}</button>
          <label for="xy">X Y :</label><input class="xy" id="xy">
          <button class="mode in bang" aria-label="Alert"><svg width="18" height="22"><rect x="1.500" y="1.500" width="15" height="18" fill="none" stroke="#000"/><path d="M9 5V13M9 15V17" stroke="#000" stroke-width="2"/></svg></button>
          <div class="hint">&lt;M1&gt; - Select feature to highlight ; &lt;M1&gt;&lt;M1&gt; - Highlight<br>&lt;Shift+M1&gt; - Add to highlight ; &lt;M2&gt; - Cancel highlight</div>
        </div>
        <footer class="status">dd.d,#14</footer>
      </section>

      <sheet-window class="sheet"></sheet-window>

      <div class="ime">
        <svg class="logo" width="28" height="25" viewBox="0 0 28 25"><path d="M0 5L21 0Q24 0 25 3L28 20Q28 23 25 24L5 27Z" fill="#e84818"/><path d="M20 8Q10 5 9 10Q9 13 15 13Q21 14 18 18Q14 21 7 18" fill="none" stroke="#fff" stroke-width="3"/></svg>
        <div class="bar"><svg width="160" height="18" viewBox="0 0 160 18" fill="#2070b8">
          <path d="M5 5H17V11H5ZM11 1V17" fill="none" stroke="#2070b8" stroke-width="2"/>
          <path d="M35 2Q42 6 38 12Q33 17 26 12Q34 13 35 2Z"/>
          <circle cx="50" cy="5" r="2" fill="none" stroke="#2070b8"/><path d="M55 8H59Q60 13 55 15Q57 12 55 11Z"/>
          <rect x="68" y="3" width="16" height="12" rx="2"/><path d="M70 6H82M70 9H82M72 12H80" stroke="#fff" stroke-dasharray="2 1"/>
          <g fill="#b4bccc"><circle cx="98" cy="4" r="3"/><path d="M92 12Q92 8 98 8Q104 8 104 12L101 12V15H95V12Z"/></g>
          <path d="M117 2Q120 5 123 2L127 5L125 9H123V15H117V9H115L113 5Z"/>
          <path d="M134 15L142 7Q141 2 147 2L145 5L147 7L150 5Q150 10 145 10L137 17Z"/>
        </svg></div>
        <div class="ball">49</div>
      </div>`;
  }
}
